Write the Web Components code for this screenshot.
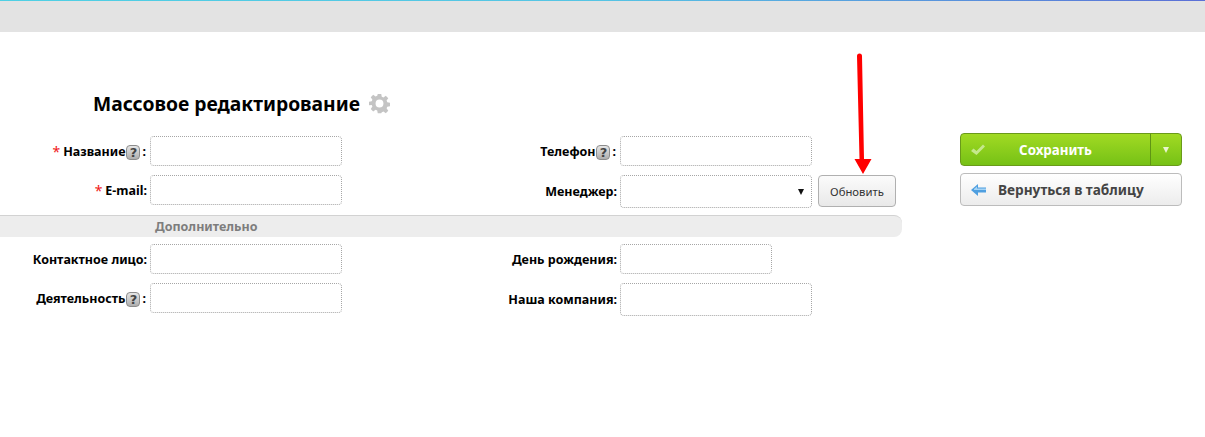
<!DOCTYPE html>
<html lang="ru">
<head>
<meta charset="utf-8">
<title>Массовое редактирование</title>
<style>
html, body { margin: 0; padding: 0; background: #fff; }
body { font-family: "Noto Sans", "Open Sans", sans-serif; position: relative; height: 437px; overflow: hidden; }
.grid { display: grid; grid-template-columns: 342px 1fr; row-gap: 9px; }
.grid.top { margin-top: 19px; }
.grid.extra { margin-top: 7px; }
</style>
</head>
<body>
<crm-topbar></crm-topbar>
<crm-page>
  <crm-title>Массовое редактирование</crm-title>
  <div class="grid top">
    <crm-field label="Название" required hint></crm-field>
    <crm-field label="Телефон" hint wide></crm-field>
    <crm-field label="E-mail" required></crm-field>
    <crm-field label="Менеджер" wide type="select"><crm-button>Обновить</crm-button></crm-field>
  </div>
  <crm-section>Дополнительно</crm-section>
  <div class="grid extra">
    <crm-field label="Контактное лицо"></crm-field>
    <crm-field label="День рождения" wide size="short"></crm-field>
    <crm-field label="Деятельность" hint></crm-field>
    <crm-field label="Наша компания" wide size="tall"></crm-field>
  </div>
  <crm-actions slot="aside"></crm-actions>
</crm-page>
<crm-arrow></crm-arrow>

<script>
class CrmTopbar extends HTMLElement {
  constructor() {
    super();
    this.attachShadow({ mode: 'open' }).innerHTML = `
<style>
:host { display: block; height: 32px; background: #e3e3e3; }
div { height: 1px; background: linear-gradient(to right, #4fd0e4, #56c4e4 50%, #5b6fd6); }
</style>
<div></div>`;
  }
}

class CrmPage extends HTMLElement {
  constructor() {
    super();
    this.attachShadow({ mode: 'open' }).innerHTML = `
<style>
:host { display: flex; align-items: flex-start; padding-top: 60px; }
main { width: 902px; flex: none; }
aside { margin: 41px 0 0 58px; width: 222px; }
</style>
<main><slot></slot></main>
<aside><slot name="aside"></slot></aside>`;
  }
}

class CrmTitle extends HTMLElement {
  constructor() {
    super();
    this.attachShadow({ mode: 'open' }).innerHTML = `
<style>
:host { display: flex; align-items: center; height: 25px; padding-left: 93px; gap: 9px; color: #000; font-size: 19.300px; font-weight: 700; }
span { position: relative; top: -1px; }
svg { width: 21px; height: 21px; flex: none; margin-top: -2px; }
</style>
<span><slot></slot></span>
<svg viewBox="0 0 24 24"><path fill="#c4c4c4" fill-rule="evenodd" d="M10 1h4l.6 3.2 1.9.8 2.7-1.9 2.8 2.8-1.9 2.7.8 1.9 3.1.5v4l-3.1.6-.8 1.9 1.9 2.7-2.8 2.8-2.7-1.9-1.9.8L14 23h-4l-.6-3.1-1.9-.8-2.7 1.9-2.8-2.8 1.9-2.7-.8-1.9L0 14v-4l3.1-.5.8-1.9L2 4.900 4.800 2.100l2.700 1.900 1.900-.8zM12 7.500a4.500 4.500 0 1 0 0 9 4.500 4.500 0 0 0 0-9z"/></svg>`;
  }
}

class CrmField extends HTMLElement {
  constructor() {
    super();
    this.attachShadow({ mode: 'open' });
  }

  connectedCallback() {
    const label = this.getAttribute('label');
    const star = this.hasAttribute('required') ? '<i>*</i>' : '';
    const hint = this.hasAttribute('hint') ? '<crm-hint></crm-hint><span class="sep">:</span>' : ':';
    const size = this.getAttribute('size') || '';
    const control = this.getAttribute('type') === 'select'
      ? `<select class="box tall"><option></option></select>`
      : `<input class="box ${size}" type="text">`;
    this.shadowRoot.innerHTML = `
<style>
:host { display: grid; grid-template-columns: 147px auto; column-gap: 3px; align-items: start; }
:host([wide]) { grid-template-columns: 275px auto; }
label { display: flex; justify-content: flex-end; align-items: center; height: 30px; color: #000; font-size: 12.500px; font-weight: 700; white-space: pre; }
:host([type=select]) label, :host([size=tall]) label { height: 33px; }
i { color: #f01818; font-size: 14px; font-style: normal; font-weight: 400; margin-right: 3px; }
.sep { margin-left: 2px; margin-right: 1px; }
.row { display: flex; align-items: flex-start; gap: 6px; }
.box { box-sizing: border-box; width: 192px; height: 30px; margin: 0; padding: 0 6px; border: 1px dotted #a6a6a6; border-radius: 4px; background: #fff; font: inherit; outline: none; }
.short { width: 152px; }
.tall { height: 33px; }
select.box { appearance: none; background: #fff; }
.control { position: relative; display: block; }
.caret { position: absolute; right: 8px; top: 14px; width: 0; height: 0; border: 3px solid transparent; border-top: 6px solid #111; border-bottom: 0; pointer-events: none; }
</style>
<label>${star}${label}${hint}</label>
<div class="row"><span class="control">${control}${this.getAttribute('type') === 'select' ? '<span class="caret"></span>' : ''}</span><slot></slot></div>`;
  }
}

class CrmHint extends HTMLElement {
  constructor() {
    super();
    this.attachShadow({ mode: 'open' }).innerHTML = `
<style>
:host { display: inline-flex; align-items: center; justify-content: center; box-sizing: border-box; width: 14px; height: 15px; margin: 2px 0 0 1px; border: 1px solid #8c8c8c; border-radius: 4px; background: linear-gradient(#e6e6e6, #aeaeae); color: #444; font-family: "DejaVu Sans", sans-serif; font-size: 13px; font-weight: 700; line-height: 1; }
</style>?`;
  }
}

class CrmButton extends HTMLElement {
  constructor() {
    super();
    this.attachShadow({ mode: 'open' }).innerHTML = `
<style>
:host { display: flex; align-items: center; justify-content: center; box-sizing: border-box; width: 78px; height: 32px; border: 1px solid #b0b0b0; border-radius: 4px; background: linear-gradient(#fbfbfb, #e9e9e9); color: #333; font-size: 11.300px; }
</style><slot></slot>`;
  }
}

class CrmSection extends HTMLElement {
  constructor() {
    super();
    this.attachShadow({ mode: 'open' }).innerHTML = `
<style>
:host { display: flex; align-items: center; box-sizing: border-box; height: 22px; margin-top: 7px; padding-left: 155px; border-top: 1px solid #d2d2d2; border-radius: 0 8px 8px 0; background: #ededed; color: #7d7d7d; font-size: 12.500px; font-weight: 700; }
</style><slot></slot>`;
  }
}

class CrmActions extends HTMLElement {
  constructor() {
    super();
    this.attachShadow({ mode: 'open' }).innerHTML = `
<style>
:host { display: flex; flex-direction: column; gap: 7px; font-size: 13.300px; font-weight: 700; }
.save { display: flex; height: 33px; box-sizing: border-box; border: 1px solid #6a9a1a; border-radius: 4px; background: linear-gradient(#a1da23, #76c116); color: #fff; }
.main { flex: 1; position: relative; display: flex; align-items: center; justify-content: center; }
.main svg { position: absolute; left: 9px; top: 9px; }
.drop { width: 30px; display: flex; align-items: center; justify-content: center; border-left: 1px solid #5f9414; }
.drop b { width: 0; height: 0; border: 3.500px solid transparent; border-top: 6px solid #e9f5cf; border-bottom: 0; }
.back { display: flex; align-items: center; gap: 11px; height: 33px; box-sizing: border-box; padding-left: 10px; border: 1px solid #bcbcbc; border-radius: 4px; background: linear-gradient(#fff, #ececec); color: #444; font-size: 13.650px; }
</style>
<div class="save">
  <div class="main"><svg width="16" height="14" viewBox="0 0 16 14"><path fill="#c5e88c" d="M1 8l2.500-2.500 3 2.500L13 1.500 15 3.500 6.500 12z"/></svg><span>Сохранить</span></div>
  <div class="drop"><b></b></div>
</div>
<div class="back"><svg width="16" height="14" viewBox="0 0 16 14"><path fill="#4f9fe0" d="M0 7l7-6v3.500h8v5H7V13z"/><path fill="#a6d4f5" d="M3 6l3-2.500v2h9V7H3z"/></svg><span>Вернуться в таблицу</span></div>`;
  }
}

class CrmArrow extends HTMLElement {
  constructor() {
    super();
    this.attachShadow({ mode: 'open' }).innerHTML = `
<style>
:host { position: absolute; left: 850px; top: 50px; }
svg { display: block; }
</style>
<svg width="24" height="126" viewBox="0 0 24 126"><path fill="#ff0000" d="M7 6a2.500 2.500 0 0 1 5 0l2 103h7.500L13 124 4.500 109H9.500z"/></svg>`;
  }
}

customElements.define('crm-topbar', CrmTopbar);
customElements.define('crm-page', CrmPage);
customElements.define('crm-title', CrmTitle);
customElements.define('crm-field', CrmField);
customElements.define('crm-hint', CrmHint);
customElements.define('crm-button', CrmButton);
customElements.define('crm-section', CrmSection);
customElements.define('crm-actions', CrmActions);
customElements.define('crm-arrow', CrmArrow);
</script>
</body>
</html>
